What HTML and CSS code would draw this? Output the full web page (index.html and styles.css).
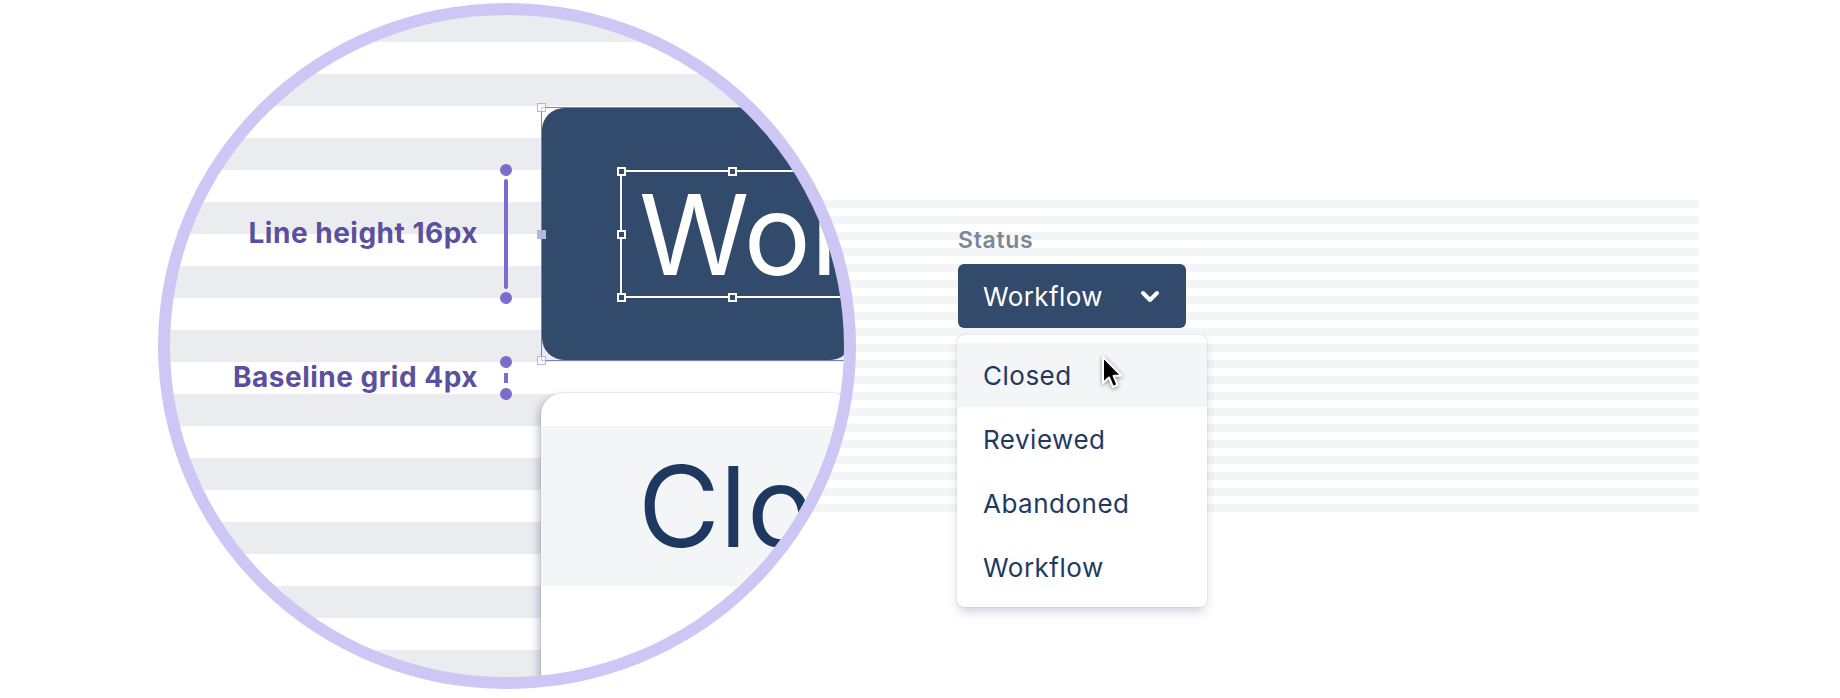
FILE: index.html
```html
<!DOCTYPE html>
<html lang="en">
<head>
<meta charset="utf-8">
<title>Status select – baseline grid</title>
<link rel="stylesheet" href="styles.css">
</head>
<body>
<main class="stage">
  <div class="lens">
    <div class="notes">
      <div class="note note-line">
        <span class="note-label">Line height 16px</span>
        <span class="marker marker-tall"><i class="dot"></i><i class="bar"></i><i class="dot"></i></span>
      </div>
      <div class="note note-grid">
        <span class="note-label">Baseline grid 4px</span>
        <span class="marker marker-short"><i class="dot"></i><i class="dash"></i><i class="dot"></i></span>
      </div>
    </div>
    <div class="parts">
      <div class="selbox">
        <div class="big-button">
          <div class="textsel">
            <span class="big-text">Workflow</span>
            <i class="h h-tl"></i><i class="h h-tm"></i><i class="h h-ml"></i><i class="h h-bl"></i><i class="h h-bm"></i>
          </div>
        </div>
        <i class="ph ph-tl"></i><i class="ph ph-ml"></i><i class="ph ph-bl"></i>
      </div>
      <div class="big-card">
        <div class="big-row">Closed</div>
      </div>
    </div>
  </div>

  <section class="panel">
    <div class="field">
      <span class="field-label">Status</span>
      <button class="select" type="button">
        <span class="select-value">Workflow</span>
        <svg class="chevron" width="20" height="13" viewBox="0 0 20 13" aria-hidden="true"><polyline points="3,3 10,10 17,3" fill="none" stroke="#fff" stroke-width="4" stroke-linecap="round" stroke-linejoin="round"/></svg>
      </button>
      <ul class="menu">
        <li class="menu-item is-hover">Closed
          <svg class="cursor" width="24" height="36" viewBox="0 0 24 36" aria-hidden="true"><path d="M2 1 V27 L8 21.5 L12 31 L16.5 29 L12.6 19.8 H20.5 Z" fill="#000" stroke="#fff" stroke-width="2" stroke-linejoin="round"/></svg>
        </li>
        <li class="menu-item">Reviewed</li>
        <li class="menu-item">Abandoned</li>
        <li class="menu-item">Workflow</li>
      </ul>
    </div>
  </section>
</main>
</body>
</html>
```

FILE: styles.css
```css
* { box-sizing: border-box; margin: 0; padding: 0; }
html, body { background: #fff; }
body {
  width: 1840px;
  height: 698px;
  overflow: hidden;
  font-family: Inter, "Noto Sans", sans-serif;
}

.stage {
  display: flex;
  align-items: flex-start;
  width: 1840px;
  height: 698px;
  padding-left: 158px;
  overflow: hidden;
}

/* magnifier lens */
.lens {
  position: relative;
  z-index: 2;
  flex: none;
  display: flex;
  align-items: flex-start;
  width: 698px;
  height: 686px;
  margin-top: 3px;
  border: 12px solid #cec6f4;
  border-radius: 50%;
  overflow: hidden;
  background: linear-gradient(#ebecf0 0 32px, #fff 32px 64px) 0 59px / 100% 64px repeat;
}

.notes {
  flex: none;
  width: 342px;
  padding-top: 149px;
  display: flex;
  flex-direction: column;
  align-items: flex-end;
  gap: 52px;
}
.note {
  display: flex;
  align-items: center;
  gap: 22px;
}
.note-label {
  font-weight: 700;
  font-size: 28px;
  letter-spacing: 0.5px;
  line-height: 32px;
  color: #5b4f9f;
  white-space: nowrap;
  margin-bottom: 2px;
}
.marker {
  display: flex;
  flex-direction: column;
  align-items: center;
  width: 12px;
}
.marker-tall { gap: 3px; }
.marker-short { gap: 5px; }
.dot {
  width: 12px;
  height: 12px;
  border-radius: 50%;
  background: #7b6dcc;
}
.bar {
  width: 4px;
  height: 110px;
  border-radius: 2px;
  background: #7b6dcc;
}
.dash {
  width: 4px;
  height: 10px;
  background: #7b6dcc;
}

.parts {
  flex: none;
  width: 312px;
  margin-left: 29px;
  padding-top: 92px;
  display: flex;
  flex-direction: column;
  gap: 32px;
}
.selbox {
  position: relative;
  height: 254px;
  border: 1px solid #7c81c4;
}
.big-button {
  height: 100%;
  background: #324a6b;
  border-radius: 22px;
  padding: 62px 0 0 78px;
}
.textsel {
  position: relative;
  width: 226px;
  height: 128px;
  border: 2px solid #fff;
  padding-left: 17px;
}
.big-text {
  display: block;
  overflow: hidden;
  font-size: 112px;
  line-height: 124px;
  color: #fff;
  white-space: nowrap;
}
.h {
  position: absolute;
  width: 9px;
  height: 9px;
  border: 2px solid #fff;
  background: #324a6b;
}
.h-tl { left: -5.5px; top: -5.5px; }
.h-tm { left: calc(50% - 5.5px); top: -5.5px; }
.h-ml { left: -5.5px; top: calc(50% - 4.5px); }
.h-bl { left: -5.5px; bottom: -5.5px; }
.h-bm { left: calc(50% - 5.5px); bottom: -5.5px; }

.ph {
  position: absolute;
  width: 9px;
  height: 9px;
  border: 1.5px solid #b7b1ea;
  background: rgba(255, 255, 255, 0.6);
}
.ph-tl { left: -5px; top: -5px; }
.ph-ml { left: -5px; top: calc(50% - 4.5px); background: #b9b6d9; }
.ph-bl { left: -5px; bottom: -5px; }

.big-card {
  height: 420px;
  padding-top: 33px;
  background: #fff;
  border-radius: 22px 22px 0 0;
  box-shadow: -4px 3px 10px -2px rgba(9, 30, 66, 0.3), 0 0 0 1px rgba(9, 30, 66, 0.06);
}
.big-row {
  height: 160px;
  padding-left: 97px;
  overflow: hidden;
  background: #f4f5f7;
  font-size: 112px;
  line-height: 160px;
  color: #1d3960;
  white-space: nowrap;
}

/* real-size component */
.panel {
  position: relative;
  z-index: 1;
  flex: none;
  width: 919px;
  height: 312px;
  margin: 200px 0 0 -76px;
  padding: 27px 0 0 177px;
  background: linear-gradient(#f4f5f7 0 8px, transparent 8px 16px) 0 0 / 100% 16px repeat;
}
.field {
  display: flex;
  flex-direction: column;
  align-items: flex-start;
  width: 250px;
}
.field-label {
  margin-left: 1px;
  font-size: 23px;
  font-weight: 600;
  letter-spacing: 0.7px;
  line-height: 26px;
  color: #7a869a;
}
.select {
  margin: 11px 0 0 1px;
  width: 228px;
  height: 64px;
  display: flex;
  align-items: center;
  justify-content: space-between;
  padding: 0 26px 0 25px;
  border: 0;
  border-radius: 6px;
  background: #324a6b;
  color: #fff;
  font-family: inherit;
  font-size: 26px;
  letter-spacing: 0.4px;
}
.select-value { line-height: 64px; padding-top: 2px; }
.chevron { display: block; flex: none; }

.menu {
  margin-top: 7px;
  width: 250px;
  padding: 8px 0;
  list-style: none;
  border-radius: 6px;
  background: #fff;
  box-shadow: 0 6px 12px -3px rgba(9, 30, 66, 0.25), 0 0 1px rgba(9, 30, 66, 0.4);
}
.menu-item {
  position: relative;
  height: 64px;
  padding-left: 26px;
  font-size: 26px;
  letter-spacing: 0.5px;
  line-height: 66px;
  color: #1f3a62;
}
.menu-item.is-hover { background: #f4f5f7; }
.cursor {
  position: absolute;
  left: 144px;
  top: 13px;
  filter: drop-shadow(0 1px 2px rgba(0, 0, 0, 0.45));
}
```
